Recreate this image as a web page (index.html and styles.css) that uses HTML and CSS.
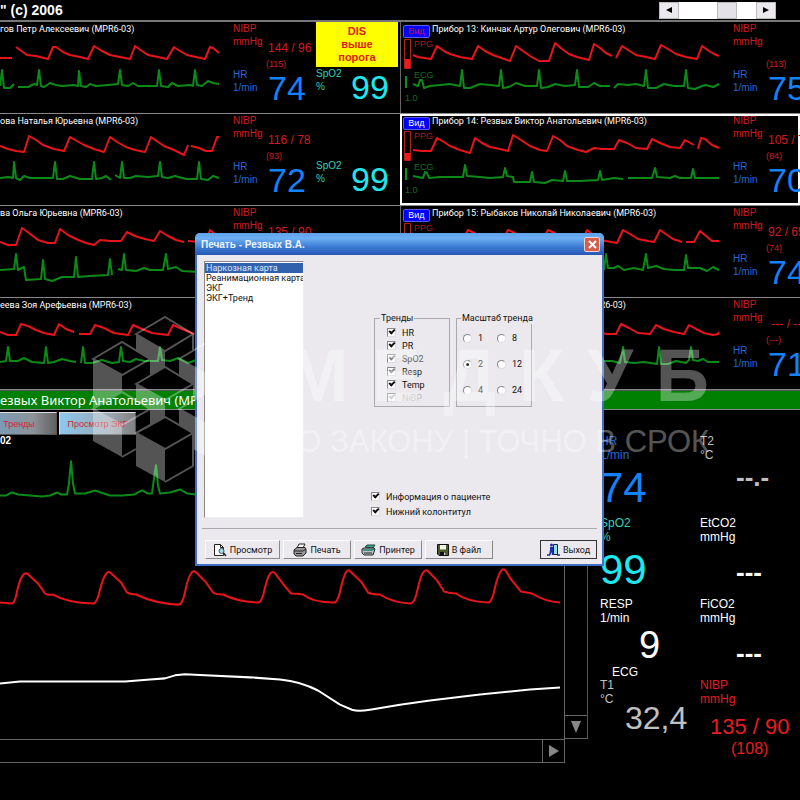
FILE: index.html
```
<!DOCTYPE html>
<html lang="ru">
<head>
	<meta charset="utf-8">
	<title>Печать - Резвых В.А.</title>
	<link rel="stylesheet" href="styles.css">
</head>
<body>
	<header class="topBar">
		<span class="copy">" (c) 2006</span>
		<div class="scroller">
			<button type="button" aria-label="Назад"><svg width="6" height="6"><path d="M6 0v6L0 3z"/></svg></button>
			<div class="track"><div class="thumb"></div></div>
			<button type="button" aria-label="Вперёд"><svg width="6" height="6"><path d="M0 0v6l6-3z"/></svg></button>
		</div>
	</header>

	<main>
		<!-- пациенты -->
		<div class="patients">
			<section class="cell">
				<div class="wave">
					<div class="cellHead"><span class="name">гов Петр Алексеевич (MPR6-03)</span></div>
					<svg class="plot" width="232" height="74" viewBox="0 37 232 74">
						<path class="ppg" d="M0 58L12 58M16 47L20 50 27 55 36 56 48 59 53 47 56 47 63 52 70 55 80 57 88 59 94 46 102 51 110 55 120 57 130 59 135 46 142 51 148 55 158 57 167 59 174 47 180 51 187 55 196 57 205 59 210 47 213 48 219 53"/>
						<path class="ecg" d="M0 86L2 70 4 88 10 88 14 84M18 87L28 87 34 84 37 85 39 70 41 86 44 87 50 83 56 85 62 86 74 85 78 86 79 71 81 86 86 87 90 84 96 86 108 85 118 84 120 70 122 85 128 86 133 83 138 86 150 86 157 86 159 70 161 86 168 87 172 83 178 86 190 85 193 86 195 70 197 85 202 86 208 81 213 83 219 84"/>
					</svg>
				</div>
				<div class="vitals">
					<div class="vital nibp">
						<span class="unit">NIBP<br>mmHg</span>
						<span class="reading"><b>144 / 96</b><i>(115)</i></span>
					</div>
					<div class="vital hr"><span class="unit">HR<br>1/min</span><span class="big">74</span></div>
				</div>
				<div class="vitals">
					<div class="alarm">DIS<br>выше<br>порога</div>
					<div class="vital spo"><span class="unit">SpO2<br>%</span><span class="big">99</span></div>
				</div>
			</section>

			<section class="cell">
				<div class="wave">
					<div class="cellHead"><button type="button" class="view alert">Вид</button><span class="name">Прибор 13: Кинчак Артур Олегович (MPR6-03)</span></div>
					<svg class="plot" width="330" height="74" viewBox="400 37 330 74">
						<path class="gauge" d="M404.500 39.500h6v29h-6z"/><path class="level" d="M405 59h5v9h-5z"/>
						<path class="mark" d="M406 76v12"/>
						<text class="tPpg" x="414" y="47">PPG</text><text class="tEcg" x="414" y="78">ECG</text><text class="tEcg" x="405" y="101">1.0</text>
						<path class="ppg" d="M413 55L418 57 431 59 437 46 444 51 450 54 460 57 472 59 478 46 485 51 493 55 510 61 516 46 523 51 530 56 539 61 549 61 555 43 562 49 569 54 577 57 589 60 594 44 600 48 606 53 612 56M616 58L622 46 628 50 636 55 646 57 655 59 661 45 668 49 676 54 686 57 697 59 702 46 709 51 714 54 719 56"/>
						<path class="ecg" d="M413 84L418 86 420 80 422 80 424 88 430 86 440 85 450 84 460 86 462 70 464 88 470 88 480 84 490 85 499 86 501 70 503 88 509 87 516 83 525 86 537 86 539 70 541 88 548 87 555 84 565 86 575 85 577 70 579 87 588 87 594 83 600 86 610 86M614 88L618 84 628 85 636 84 644 86 646 70 648 88 656 88 664 84 674 86 684 86 686 70 688 88 695 89 702 86 706 85 713 87 719 84"/>
					</svg>
				</div>
				<div class="vitals">
					<div class="vital nibp">
						<span class="unit">NIBP<br>mmHg</span>
						<span class="reading"><b>&nbsp;</b><i>(113)</i></span>
					</div>
					<div class="vital hr"><span class="unit">HR<br>1/min</span><span class="big">75</span></div>
				</div>
			</section>

			<section class="cell">
				<div class="wave">
					<div class="cellHead"><span class="name">ова Наталья Юрьевна (MPR6-03)</span></div>
					<svg class="plot" width="232" height="74" viewBox="0 129 232 74">
						<path class="ppg" d="M0 146L8 149 16 151 24 152 29 136 36 140 43 145 54 149 64 151 70 137 77 141 84 145 94 149 104 152 110 137 117 142 126 147 135 150 145 152 151 137 158 142 164 146 174 150 184 155 188 145M191 146L199 148 206 151 212 151 217 137 219 137"/>
						<path class="ecg" d="M0 178L8 177 13 178 14 162 16 178 20 180 24 176 30 178 44 178 53 178 55 162 57 179 63 179 70 176 80 179 92 179 94 162 96 179 102 178 106 176 111 180M115 175L120 178 122 162 124 178 130 178 136 176 148 177 158 176 160 162 162 177 168 178 175 176 186 179 197 179 199 162 201 179 208 180 213 176 219 178"/>
					</svg>
				</div>
				<div class="vitals">
					<div class="vital nibp">
						<span class="unit">NIBP<br>mmHg</span>
						<span class="reading"><b>116 / 78</b><i>(93)</i></span>
					</div>
					<div class="vital hr"><span class="unit">HR<br>1/min</span><span class="big">72</span></div>
				</div>
				<div class="vitals">
					<div class="vital spo"><span class="unit">SpO2<br>%</span><span class="big">99</span></div>
				</div>
			</section>

			<section class="cell active">
				<div class="wave">
					<div class="cellHead"><button type="button" class="view">Вид</button><span class="name">Прибор 14: Резвых Виктор Анатольевич (MPR6-03)</span></div>
					<svg class="plot" width="330" height="74" viewBox="400 129 330 74">
						<path class="gauge" d="M404.500 131.500h6v29h-6z"/><path class="level" d="M405 153h5v7h-5z"/>
						<path class="mark" d="M406 168v12"/>
						<text class="tPpg" x="414" y="139">PPG</text><text class="tEcg" x="414" y="170">ECG</text><text class="tEcg" x="405" y="193">1.0</text>
						<path class="ppg" d="M413 150L422 151 431 151 437 138 444 142 450 146 460 150 470 153 475 138 482 143 490 147 500 149 508 151 513 135 521 140 530 146 540 150 547 151 553 136 560 140 567 146 578 150 586 152 594 148 602 149 614 149 619 140 627 143 636 148 647 149 652 139 660 143 670 147 680 148 685 140 694 145M698 149L701 138 705 139 712 145 719 148"/>
						<path class="ecg" d="M413 176L423 178 425 172 427 173 429 178 440 177 463 177 465 165 467 176 480 177 490 178 503 177 505 168 507 176 513 177 514 182 530 182 532 172 534 182 545 183 552 180 563 181 565 171 567 181 580 181 598 180 600 171 602 180 614 178 623 179M628 178L652 178 655 168 657 177 670 178 675 176 680 178 691 178 693 169 695 178 719 178"/>
					</svg>
				</div>
				<div class="vitals">
					<div class="vital nibp">
						<span class="unit">NIBP<br>mmHg</span>
						<span class="reading"><b>105 / 74</b><i>(84)</i></span>
					</div>
					<div class="vital hr"><span class="unit">HR<br>1/min</span><span class="big">70</span></div>
				</div>
			</section>

			<section class="cell">
				<div class="wave">
					<div class="cellHead"><span class="name">ва Ольга Юрьевна (MPR6-03)</span></div>
					<svg class="plot" width="232" height="74" viewBox="0 221 232 74">
						<path class="ppg" d="M0 242L8 245 16 245 22 228 29 233 38 240 48 243 55 243 60 229 68 235 76 239 86 243 94 245 100 240 110 241 121 241 127 232 135 236 145 239 154 241 160 231 168 236 176 240 184 242M188 241L200 242 206 242 210 230 216 235"/>
						<path class="ecg" d="M0 270L14 269 16 254 18 270 24 267 26 280 41 279 43 260 45 279 52 281 62 277 74 277 76 257 78 277 90 276 108 275 110 259 112 275M118 269L122 270 124 254 126 270 136 271 144 268 150 270 163 270 166 254 168 269 176 267 182 271 200 272"/>
					</svg>
				</div>
				<div class="vitals">
					<div class="vital nibp">
						<span class="unit">NIBP<br>mmHg</span>
						<span class="reading"><b>135 / 90</b></span>
					</div>
				</div>
				<div class="vitals"></div>
			</section>

			<section class="cell">
				<div class="wave">
					<div class="cellHead"><button type="button" class="view">Вид</button><span class="name">Прибор 15: Рыбаков Николай Николаевич (MPR6-03)</span></div>
					<svg class="plot" width="330" height="74" viewBox="400 221 330 74">
						<path class="gauge" d="M404.500 223.500h6v29h-6z"/>
						<text class="tPpg" x="414" y="231">PPG</text>
						<path class="ppg" d="M413 238L462 242 468 230 485 238 502 242 508 230 530 240 542 242 548 230 570 240 582 242 587 230 600 240 617 243 623 230 630 234 638 239 648 241 654 242 660 230 667 235 673 239 682 242M686 242L694 242 700 231 706 236 712 241 719 241"/>
						<path class="ecg" d="M604 270L606 254 608 268 614 268 618 266 624 270 634 268 643 270 646 254 648 268 656 266 664 269 674 270 684 270 686 255 688 268 694 268 700 268 707 271 713 267 719 270"/>
					</svg>
				</div>
				<div class="vitals">
					<div class="vital nibp">
						<span class="unit">NIBP<br>mmHg</span>
						<span class="reading"><b>92 / 65</b><i>(74)</i></span>
					</div>
					<div class="vital hr"><span class="unit">HR<br>1/min</span><span class="big">74</span></div>
				</div>
			</section>

			<section class="cell">
				<div class="wave">
					<div class="cellHead"><span class="name">еева Зоя Арефьевна (MPR6-03)</span></div>
					<svg class="plot" width="232" height="74" viewBox="0 313 232 74">
						<path class="ppg" d="M0 332L8 335 16 335 21 324 28 326 36 330 44 333 54 335 59 324 66 329 74 332M79 334L90 334 95 325 104 328 114 333 128 335 133 325 142 329 152 333 168 335 173 325 182 329 194 334"/>
						<path class="ecg" d="M0 362L6 361 8 347 10 361 18 361 24 358 32 362 44 363 46 347 48 363 54 362 62 359 70 361 76 362M81 363L83 347 85 363 92 363 102 360 112 363 119 362 121 347 123 361 130 362 136 359 144 361 158 361 160 347 162 360 170 361 178 358 188 363 196 360"/>
					</svg>
				</div>
				<div class="vitals"></div>
				<div class="vitals"></div>
			</section>

			<section class="cell">
				<div class="wave">
					<div class="cellHead tail"><span class="name">(MPR6-03)</span></div>
					<svg class="plot" width="330" height="74" viewBox="400 313 330 74">
						<path class="ppg" d="M600 333L608 334 616 334 621 324 629 328 638 333 650 334 656 325 664 329 674 332 684 334 689 325 696 329 704 333 713 335 718 334 719 332"/>
						<path class="ecg" d="M600 361L612 361 620 363 623 347 625 362 634 363 644 362 657 364 659 347 661 364 668 364 676 361 686 363 689 360 691 347 693 360 698 361 703 359 708 362 719 362"/>
					</svg>
				</div>
				<div class="vitals">
					<div class="vital nibp">
						<span class="unit">NIBP<br>mmHg</span>
						<span class="reading"><b>&nbsp;--- / ---</b><i>(---)</i></span>
					</div>
					<div class="vital hr"><span class="unit">HR<br>1/min</span><span class="big">71</span></div>
				</div>
			</section>
		</div>

		<!-- выбранный пациент -->
		<h1 class="current">езвых Виктор Анатольевич (MPR6-03)</h1>
		<div class="monitor">
			<div class="charts">
				<nav class="tabs">
					<button type="button" class="tab first">Тренды</button>
					<button type="button" class="tab">Просмотр ЭКГ</button>
				</nav>
				<div class="chartBox">
					<div class="chart">
						<span class="chartLabel">02</span>
						<svg viewBox="0 449 564 289" preserveAspectRatio="none">
							<path class="ecg" d="M0 497L6 497 12 494 18 496 30 497 42 498 50 497 57 494 61 496 67 496 69 485 71 463 73 485 75 495 85 495 95 492 101 494 110 497 122 497 134 496 142 492 148 495 152 495 154 480 156 467 158 487 160 495 170 494 180 491 187 495 196 496"/>
							<path class="ppg" d="M0 603L12 604Q15 603 17 592Q22 570 28 575L38 584 45 594Q48 596 53 595Q67 603 93 604Q97 604 100 590Q106 568 111 574L121 583 127 593Q131 595 136 595Q155 604 179 605Q183 604 186 588Q191 568 196 573L206 583 213 593Q216 595 223 595Q237 602 258 603Q262 603 265 588Q270 568 275 574L285 587 291 594Q297 594 303 595Q313 603 334 603Q338 603 341 588Q346 567 350 572L361 582 368 593Q372 595 380 595Q392 603 411 604Q415 603 418 588Q423 567 428 572L437 581 444 592Q450 594 456 594Q467 602 488 603Q492 603 495 588Q501 564 506 572L511 580 521 592Q527 593 532 594Q545 602 560 603"/>
							<path class="resp" d="M0 683L10 682 20 681 40 681 125 681 150 679 165 678 175 675 185 674 205 675 250 677 280 679Q301 681 318 690L340 704 352 709Q358 711 370 709L400 704 430 700 480 694 530 689 560 687"/>
						</svg>
					</div>
					<div class="vScroll"><button type="button" aria-label="Вниз"><svg width="12" height="12"><path d="M1 0h10L6 12z"/></svg></button></div>
				</div>
				<div class="hScroll"><button type="button" aria-label="Вправо"><svg width="12" height="12"><path d="M1 0v12l10-6z"/></svg></button></div>
			</div>

			<div class="metrics">
				<div class="metric cHr"><span>HR<br>1/min</span><strong class="num">74</strong></div>
				<div class="metric cGray"><span>T2<br>°C</span><strong class="dash top">--.-</strong></div>
				<div class="metric cSpo"><span>SpO2<br>%</span><strong class="num">99</strong></div>
				<div class="metric"><span>EtCO2<br>mmHg</span><strong class="dash">---</strong></div>
				<div class="metric"><span>RESP<br>1/min</span><strong class="num small">9</strong><em>ECG</em></div>
				<div class="metric"><span>FiCO2<br>mmHg</span><strong class="dash">---</strong></div>
				<div class="metric cGray"><span>T1<br>°C</span><strong class="temp">32,4</strong></div>
				<div class="metric cRed"><span>NIBP<br>mmHg</span><strong class="press">135 / 90</strong><strong class="mean">(108)</strong></div>
			</div>
		</div>
	</main>

	<!-- окно печати -->
	<div class="dialog" role="dialog" aria-labelledby="dlgTitle">
		<div class="dlgHead">
			<h2 id="dlgTitle">Печать - Резвых В.А.</h2>
			<button type="button" class="close" aria-label="Закрыть"><svg width="9" height="9"><path d="M1 1l7 7M8 1L1 8"/></svg></button>
		</div>
		<form class="dlgBody">
			<div class="dlgMain">
				<select class="list" size="12" aria-label="Вид отчёта">
					<option selected>Наркозная карта</option>
					<option>Реанимационная карта</option>
					<option>ЭКГ</option>
					<option>ЭКГ+Тренд</option>
				</select>
				<div class="options">
					<div class="groups">
						<fieldset class="trends">
							<legend>Тренды</legend>
							<label><input type="checkbox" checked>HR</label>
							<label><input type="checkbox" checked>PR</label>
							<label class="dim"><input type="checkbox" checked>SpO2</label>
							<label class="dim"><input type="checkbox" checked><span>Resp</span></label>
							<label><input type="checkbox" checked>Temp</label>
							<label class="off"><input type="checkbox" checked disabled>NiBP</label>
						</fieldset>
						<fieldset class="scale">
							<legend>Масштаб тренда</legend>
							<label><input type="radio" name="scale">1</label>
							<label><input type="radio" name="scale">8</label>
							<label><input type="radio" name="scale" checked>2</label>
							<label><input type="radio" name="scale">12</label>
							<label><input type="radio" name="scale">4</label>
							<label><input type="radio" name="scale">24</label>
						</fieldset>
					</div>
					<div class="extra">
						<label><input type="checkbox" checked>Информация о пациенте</label>
						<label><input type="checkbox" checked>Нижний колонтитул</label>
					</div>
				</div>
			</div>
			<div class="dlgButtons">
				<button type="button" class="w1">
					<svg width="14" height="14" viewBox="0 0 14 14"><path d="M1.500 1.500h6l3 3v8h-9z" fill="#fff" stroke="#222"/><path d="M7.500 1.500v3h3" fill="none" stroke="#222"/><circle cx="8.500" cy="8" r="2.500" fill="#a8e0e0" stroke="#357"/><path d="M10.500 10l2.500 3" stroke="#222" stroke-width="1.500"/></svg>
					Просмотр
				</button>
				<button type="button" class="w2">
					<svg width="14" height="14" viewBox="0 0 14 14"><path d="M4 5l2-4h6l-2 4z" fill="#fff" stroke="#222"/><path d="M1 7l3-2.500h8L13 6v4l-3 3H3l-2-2z" fill="#999" stroke="#222"/><path d="M1 8h9l3-2M3 10.500h6" fill="none" stroke="#222"/></svg>
					Печать
				</button>
				<button type="button" class="w2">
					<svg width="15" height="14" viewBox="0 0 15 14"><path d="M4 4l2-2h8l-2 3z" fill="#3aa79a" stroke="#243"/><path d="M1 6l2-1h10l1 1-2 6H3L1 10z" fill="#b9c4c4" stroke="#222"/><path d="M2 7h9l2-1" fill="none" stroke="#188074" stroke-width="1.500"/><path d="M3 10h8" stroke="#222"/></svg>
					Принтер
				</button>
				<button type="button" class="w2">
					<svg width="12" height="12" viewBox="0 0 12 12"><path d="M.5.500h11v11H2l-1.500-1.500z" fill="#4c5a2c" stroke="#111"/><path d="M3 1h6v4.500H3z" fill="#f2f2ea"/><path d="M3 8h6v3.500H3z" fill="#111"/><path d="M7 8.500h1.500V11H7z" fill="#ddd"/></svg>
					В файл
				</button>
				<button type="button" class="exit">
					<svg width="13" height="13" viewBox="0 0 13 13"><path d="M6.500 1.500h4v10h-4z" fill="#8fe0e8" stroke="#222"/><circle cx="4.500" cy="2" r="1.500" fill="#1c2bb0"/><path d="M3 4h3v3l1 5H5L4.500 9 3.500 12H2l1-5z" fill="#1c2bb0"/><path d="M0 12h3M10 12h3" stroke="#1c2bb0" stroke-width="1.500"/></svg>
					Выход
				</button>
			</div>
		</form>
	</div>

	<!-- водяной знак -->
	<div class="overlay">
		<svg class="cubes" width="148" height="168" viewBox="91 316 148 168">
			<g fill="#fff">
				<path d="M136 334L165 351V367L150 375V359L136 351z"/>
				<path d="M93 359L122 375V392L93 408z"/>
				<path d="M179 359L208 375V392L193 400V384L179 375z"/>
				<path d="M136 384L165 400V417L150 425V409L136 400z"/>
				<path d="M93 409L122 425V457L93 441z"/>
				<path d="M179 409L208 425V457L193 449V434L179 425z"/>
				<path d="M136 433L165 449V482L136 466z"/>
			</g>
			<g fill="none" stroke="#fff" stroke-width="2">
				<path d="M136 334L165 317 193 334 165 351zM93 359L122 342 150 359 122 375zM179 359L208 342 237 359 208 375z"/>
				<path d="M136 384L165 367 193 384 165 400zM93 409L122 392 150 409 122 425zM179 409L208 392 237 409 208 425z"/>
				<path d="M136 433L165 417 193 433 165 449zM193 334V351M237 359V441L208 457M122 457L136 449M165 482L193 466V433"/>
			</g>
		</svg>
		<div class="brand">
			<div class="word"><span>М</span><span>Е</span><span>Д</span><span>К</span><span>У</span><span>Б</span></div>
			<div class="motto">ПО ЗАКОНУ | ТОЧНО В СРОК</div>
		</div>
	</div>
</body>
</html>
```
FILE: styles.css
```
*, *:after, *:before {
	box-sizing: border-box;
}
html, body {
	margin: 0;
	background: #000;
	color: #fff;
	font-family: "Liberation Sans", Arial, sans-serif;
}
body {
	position: relative;
	min-height: 100vh;
	overflow: hidden;
}
button {
	font-family: inherit;
	padding: 0;
	margin: 0;
	cursor: pointer;
}

/* верхняя строка */
.topBar {
	display: flex;
	justify-content: space-between;
	align-items: center;
	height: 20px;
	padding-right: 24px;
}
.copy {
	font-size: 14px;
	font-weight: bold;
}
.scroller {
	display: flex;
	width: 117px;
	height: 17px;
	background: #fff;
}
.scroller button {
	width: 20px;
	border: 1px solid #bbb;
	background: #ece9ee;
}
.scroller button svg {
	display: block;
	margin: 0 auto;
}
.track {
	flex: 1;
	display: flex;
	justify-content: flex-end;
	padding-right: 19px;
}
.thumb {
	width: 20px;
	background: #e4e2e8;
	border: 1px solid #bbb;
}

/* сетка пациентов */
.patients {
	display: grid;
	grid-template-columns: 1fr 1fr;
	grid-auto-rows: 92px;
	border-top: 2px solid #777;
}
.cell {
	display: flex;
	min-width: 0;
	overflow: hidden;
	border-bottom: 1px solid #888;
}
.cell:nth-child(even) {
	box-shadow: inset 1px 0 #666;
}
.cell.active {
	box-shadow: inset 0 0 0 2px #fff;
}
.wave {
	flex: 0 0 333px;
}
.cell:nth-child(odd) .wave {
	flex: 1 0 232px;
}
.cellHead {
	display: flex;
	align-items: center;
	height: 15px;
}
.cell:nth-child(even) .cellHead {
	padding-left: 3px;
	gap: 2px;
}
.cell:nth-child(even) .tail {
	width: 226px;
	justify-content: flex-end;
}
.view {
	width: 27px;
	height: 13px;
	margin-top: 3px;
	border: 1px solid #5a5af0;
	border-radius: 2px;
	background: #00f;
	color: #fff;
	font-size: 9px;
	line-height: 11px;
}
.view.alert {
	color: #c0104a;
}
.name {
	font-family: Roboto, "Liberation Sans", sans-serif;
	font-size: 9px;
	line-height: 15px;
	white-space: nowrap;
}
.plot {
	display: block;
}
.ppg, .ecg, .resp {
	fill: none;
	stroke: #e8141c;
	stroke-width: 2;
	stroke-linejoin: round;
}
.ecg {
	stroke: #0c8a18;
}
.resp {
	stroke: #fff;
}
.gauge {
	fill: none;
	stroke: #b0201c;
}
.level {
	fill: #f01818;
}
.mark {
	stroke: #109020;
	stroke-width: 2;
}
.tPpg, .tEcg {
	font-size: 9px;
	fill: #a81c20;
}
.tEcg {
	fill: #146c20;
}
.vitals {
	flex: 0 0 83px;
	display: flex;
	flex-direction: column;
	justify-content: flex-end;
}
.vitals:nth-child(3) {
	flex-basis: 84px;
}
.vital {
	display: flex;
	height: 46px;
}
.unit {
	flex: 0 0 33px;
	font-size: 10px;
	line-height: 13px;
}
.nibp {
	color: #d01c20;
	margin-bottom: auto;
}
.reading {
	padding-top: 20px;
	line-height: 13px;
	white-space: nowrap;
}
.reading b {
	display: block;
	padding-left: 2px;
	font-size: 12px;
	font-weight: normal;
}
.reading i {
	font-size: 9px;
	font-style: normal;
}
.hr {
	color: #2468d8;
}
.hr .big {
	color: #1482fa;
}
.spo {
	color: #34d0b8;
}
.spo .big {
	color: #1ee8ee;
}
.big {
	padding-left: 2px;
	font-size: 34px;
	line-height: 40px;
}
.alarm {
	height: 45px;
	width: 82px;
	padding-top: 3px;
	background: #ff0;
	color: #e02010;
	font-size: 11px;
	font-weight: bold;
	line-height: 13px;
	text-align: center;
}

/* выбранный пациент */
.current {
	margin: 0;
	height: 20px;
	border-top: 1px solid #555;
	border-bottom: 1px solid #888;
	background: #008000;
	font-family: "Noto Sans", "DejaVu Sans", sans-serif;
	font-size: 13px;
	font-weight: normal;
	line-height: 18px;
	white-space: nowrap;
}
.monitor {
	display: grid;
	grid-template-columns: 1fr 200px;
	column-gap: 12px;
}
.tabs {
	display: flex;
	gap: 2px;
	padding-top: 2px;
}
.tab {
	width: 77px;
	height: 23px;
	border: 1px solid #ddd;
	border-right-color: #555;
	border-bottom-color: #555;
	background: linear-gradient(90deg, #8cc8ee, #9aa4ac 70%, #808080);
	color: #d81c30;
	font-size: 9px;
}
.tab.first {
	width: 57px;
	padding-right: 18px;
	border-left: 0;
	background: linear-gradient(90deg, #7c9cb4, #8c9298 60%, #606060);
}
.chartBox {
	display: flex;
	height: 304px;
}
.chart {
	flex: 1;
	display: flex;
	flex-direction: column;
	border-right: 1px solid #666;
}
.chart svg {
	flex: 1;
	min-height: 0;
	width: 100%;
}
.chartLabel {
	font-size: 10px;
	font-weight: bold;
	line-height: 12px;
}
.vScroll {
	display: flex;
	align-items: flex-end;
	width: 23px;
	border-right: 1px solid #555;
}
.vScroll button, .hScroll button {
	width: 22px;
	height: 24px;
	border: 1px solid #666;
	border-width: 1px 0;
	background: #000;
}
.vScroll svg, .hScroll svg {
	display: block;
	margin: 0 auto;
	fill: #888;
}
.hScroll {
	display: flex;
	justify-content: flex-end;
	height: 24px;
	margin-right: 23px;
	border: 1px solid #666;
	border-left: 0;
}
.hScroll button {
	height: 22px;
	border-width: 0 0 0 1px;
}

.metrics {
	display: grid;
	grid-template-columns: 100px 100px;
	grid-template-rows: 82px 81px 81px 82px;
	padding-top: 24px;
}
.metric {
	display: flex;
	flex-direction: column;
	font-size: 12px;
	line-height: 14px;
	white-space: nowrap;
}
.metric strong {
	font-weight: normal;
}
.metric em {
	padding-left: 12px;
	font-style: normal;
}
.metric .num {
	font-size: 42px;
	line-height: 51px;
}
.metric .num.small {
	padding-left: 39px;
	font-size: 38px;
	line-height: 40px;
}
.metric .temp {
	padding-left: 25px;
	font-size: 32px;
	line-height: 24px;
}
.metric .dash {
	padding-left: 36px;
	font-size: 26px;
	font-weight: bold;
	line-height: 56px;
}
.metric .dash.top {
	line-height: 30px;
}
.metric .press {
	padding-left: 10px;
	font-size: 22px;
	line-height: 42px;
}
.metric .mean {
	padding-left: 31px;
	font-size: 16px;
	line-height: 2px;
}
.cHr {
	color: #2468d8;
}
.cHr .num {
	color: #1482fa;
}
.cSpo {
	color: #34d0b8;
}
.cSpo .num {
	color: #1ee8ee;
}
.cGray {
	color: #c0c0c0;
}
.cRed {
	color: #e81c20;
}

/* окно печати */
.dialog {
	position: absolute;
	left: 195px;
	top: 233px;
	width: 409px;
	height: 333px;
	display: flex;
	flex-direction: column;
	border: 2px solid #3f6ec4;
	border-top: 0;
	border-radius: 5px 5px 0 0;
	background: #ebe9ee;
	color: #111;
	font-family: Roboto, "Liberation Sans", sans-serif;
	font-size: 9px;
}
.dlgHead {
	display: flex;
	align-items: center;
	justify-content: space-between;
	height: 23px;
	margin: 0 -2px;
	padding: 0 4px 0 6px;
	border-radius: 5px 5px 0 0;
	background: linear-gradient(#5ea2ec, #6caef2 25%, #3f7fd6 60%, #2656b4);
}
.dlgHead h2 {
	margin: 0;
	color: #eef4ff;
	font-family: "Liberation Sans", sans-serif;
	font-size: 10px;
}
.close {
	width: 16px;
	height: 15px;
	border: 1px solid #f0d0d0;
	border-radius: 2px;
	background: #d4604c;
}
.close svg {
	display: block;
	margin: 0 auto;
	stroke: #fff;
	stroke-width: 2;
}
.dlgBody {
	flex: 1;
	display: flex;
	flex-direction: column;
	padding: 6px 5px 5px;
}
.dlgMain {
	display: flex;
	height: 257px;
}
.list {
	width: 100px;
	height: 257px;
	margin-left: 2px;
	padding: 1px 0;
	border: 1px solid #888;
	border-right-color: #eee;
	border-bottom-color: #eee;
	border-radius: 0;
	outline: 0;
	background: #fff;
	color: #111;
	font-family: inherit;
	font-size: 9px;
	overflow: hidden;
}
.list option {
	min-height: 10px;
	padding: 0 1px;
	line-height: 10px;
}
.list option:checked {
	background: linear-gradient(#3160ac, #3160ac);
	color: #dfe8f8;
}
.options {
	flex: 1;
	padding: 51px 0 0 70px;
}
.groups {
	display: flex;
	gap: 6px;
	height: 96px;
}
fieldset {
	min-width: 0;
	width: 76px;
	height: 95px;
	margin: 0;
	border: 1px solid #aaa;
}
legend {
	padding: 0 1px;
	line-height: 12px;
	white-space: nowrap;
}
label {
	display: flex;
	align-items: center;
	gap: 6px;
	white-space: nowrap;
}
.trends {
	padding: 2px 0 0 12px;
}
.trends legend {
	margin-left: -7px;
}
.trends label {
	height: 13px;
}
.scale {
	padding: 1px 0 0 6px;
	display: grid;
	grid-template-columns: 34px 1fr;
	grid-auto-rows: 26px;
}
.scale legend {
	margin-left: -2px;
}
.dim {
	color: #666;
}
.dim span {
	color: #222;
}
.off {
	color: #bbb;
}
input {
	appearance: none;
	position: relative;
	flex: none;
	width: 9px;
	height: 9px;
	margin: 0;
	border: 1px solid #888;
	border-right-color: #ddd;
	border-bottom-color: #ddd;
	background: #fff;
}
input[type="checkbox"]:checked:after {
	content: "";
	position: absolute;
	left: 1px;
	top: 0;
	width: 6px;
	height: 4px;
	border: solid #111;
	border-width: 0 0 2px 2px;
	transform: rotate(-45deg);
}
.dim input[type="checkbox"]:checked:after {
	border-color: #888;
}
.off input[type="checkbox"]:checked:after {
	border-color: #bbb;
}
input[type="radio"] {
	border-radius: 50%;
}
input[type="radio"]:checked:after {
	content: "";
	position: absolute;
	left: 2px;
	top: 2px;
	width: 3px;
	height: 3px;
	border-radius: 50%;
	background: #000;
}
.extra {
	padding-top: 81px;
	margin-left: -3px;
}
.extra label {
	height: 15px;
}
.dlgButtons {
	display: flex;
	gap: 3px;
	margin-top: 10px;
	padding: 11px 0 0 3px;
	border-top: 1px solid #aaa;
}
.dlgButtons button {
	display: flex;
	align-items: center;
	justify-content: center;
	gap: 3px;
	height: 19px;
	border: 1px solid #fff;
	border-right-color: #888;
	border-bottom-color: #888;
	background: #ebe9ee;
	color: #111;
	font-size: 9px;
}
.dlgButtons .w1 {
	width: 75px;
}
.dlgButtons .w2 {
	width: 68px;
}
.dlgButtons .exit {
	width: 57px;
	margin-left: auto;
	border: 1px solid #333;
}

/* водяной знак */
.overlay {
	position: absolute;
	left: 91px;
	top: 316px;
	display: flex;
	color: #fff;
	opacity: 0.33;
	pointer-events: none;
}
.brand {
	width: 440px;
	margin-left: 36px;
	padding-top: 18px;
}
.word {
	display: flex;
	justify-content: space-between;
	padding: 0 6px 0 12px;
	font-size: 74px;
	font-weight: bold;
	line-height: 84px;
}
.motto {
	margin-top: 6px;
	font-size: 31px;
	line-height: 36px;
	white-space: nowrap;
}
```
